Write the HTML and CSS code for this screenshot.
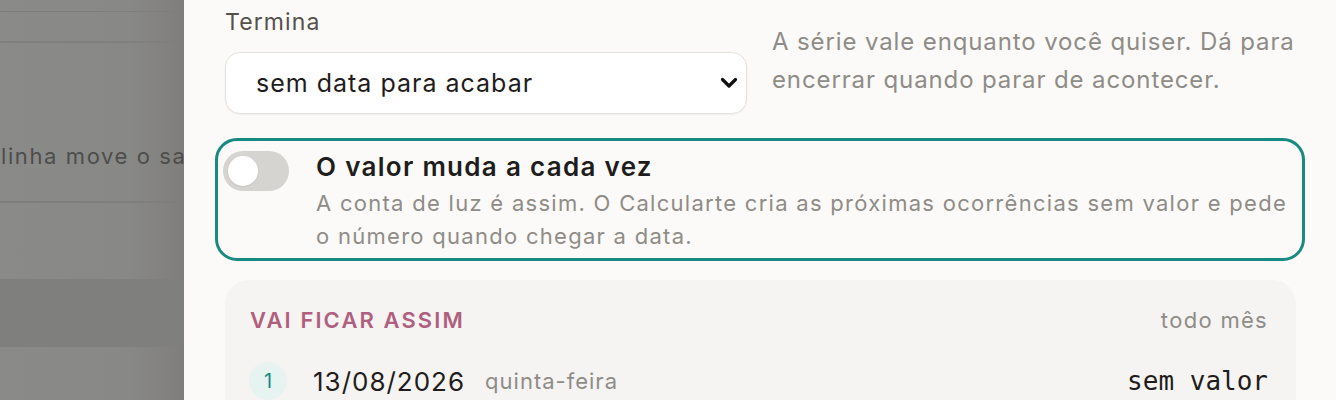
FILE: index.html
```html
<!DOCTYPE html>
<html lang="pt-BR">
<head>
  <meta charset="UTF-8">
  <meta name="viewport" content="width=device-width, initial-scale=1.0">
  <title>Nova série</title>
  <link rel="stylesheet" href="styles.css">
</head>
<body>
  <div class="backdrop">
    <div class="page">
      <div class="page-row thin"></div>
      <div class="page-row">
        <p class="page-text">linha move o saldo do mês</p>
      </div>
      <div class="page-row"></div>
      <div class="page-row shaded"></div>
    </div>
  </div>

  <aside class="drawer">
    <div class="field-row">
      <div class="field">
        <label class="label" for="ends">Termina</label>
        <select class="select" id="ends">
          <option>sem data para acabar</option>
          <option>numa data</option>
          <option>depois de algumas vezes</option>
        </select>
      </div>
      <p class="hint">A série vale enquanto você quiser. Dá para encerrar quando parar de acontecer.</p>
    </div>

    <label class="option">
      <input class="switch-input" type="checkbox">
      <span class="switch"><span class="knob"></span></span>
      <span class="option-text">
        <span class="option-title">O valor muda a cada vez</span>
        <span class="option-desc">A conta de luz é assim. O Calcularte cria as próximas ocorrências sem valor e pede o número quando chegar a data.</span>
      </span>
    </label>

    <section class="preview">
      <header class="preview-head">
        <h3 class="eyebrow">Vai ficar assim</h3>
        <span class="freq">todo mês</span>
      </header>
      <ol class="occurrences">
        <li class="occurrence">
          <span class="num">1</span>
          <span class="date">13/08/2026</span>
          <span class="weekday">quinta-feira</span>
          <span class="amount">sem valor</span>
        </li>
      </ol>
    </section>
  </aside>
</body>
</html>
```

FILE: styles.css
```css
* {
  box-sizing: border-box;
}
body {
  margin: 0;
  height: 400px;
  overflow: hidden;
  display: flex;
  font-family: Inter, "Noto Sans", sans-serif;
  background: #fbfaf8;
}

/* dimmed page behind the drawer */
.backdrop {
  width: 184px;
  flex-shrink: 0;
  overflow: hidden;
  background: linear-gradient(90deg, #8a8a89 0%, #888887 70%, #7f7e7c 100%);
}
.page {
  width: 700px;
}
.page-row.thin {
  height: 32px;
  border-top: 1px solid #7e7e7d;
  border-bottom: 2px solid #7f7f7e;
  margin-top: 11px;
}
.page-row:nth-child(2) {
  height: 160px;
  border-bottom: 2px solid #7e7e7d;
  padding-top: 99px;
}
.page-row:nth-child(3) {
  height: 76px;
}
.page-row.shaded {
  height: 68px;
  background: #7f7f7d;
}
.page-text {
  margin: 0 0 0 1px;
  font-size: 22px;
  line-height: 28px;
  letter-spacing: 1.6px;
  color: #4d4d4c;
  white-space: nowrap;
}

/* drawer */
.drawer {
  flex: 1;
  padding: 8px 40px 0 41px;
  background: #fbfaf8;
}
.field-row {
  display: grid;
  grid-template-columns: 522px 1fr;
  column-gap: 25px;
}
.label {
  display: block;
  font-size: 23px;
  line-height: 28px;
  letter-spacing: 1.1px;
  color: #56504b;
  margin-bottom: 16px;
}
.select {
  width: 100%;
  height: 62px;
  padding: 0 40px 0 30px;
  border: 1px solid #e4e2dc;
  border-radius: 15px;
  background: #fff url("data:image/svg+xml,%3Csvg xmlns='http://www.w3.org/2000/svg' width='18' height='12' viewBox='0 0 18 12'%3E%3Cpath d='M2.5 2.5l6.5 6.5 6.5-6.5' fill='none' stroke='%23111' stroke-width='3.2' stroke-linecap='round' stroke-linejoin='round'/%3E%3C/svg%3E") no-repeat right 8px center;
  appearance: none;
  font-family: inherit;
  font-size: 25px;
  letter-spacing: 1px;
  color: #1f1d1b;
  box-shadow: 0 1px 2px rgba(0, 0, 0, 0.05);
}
.hint {
  margin: 15px 0 0;
  font-size: 24px;
  line-height: 38px;
  letter-spacing: 0.88px;
  color: #8f8c87;
}

/* toggle card */
.option {
  display: flex;
  gap: 27px;
  margin: 24px -9px 0 -10px;
  padding: 10px 6px 5px 5px;
  border: 3px solid #178b81;
  border-radius: 22px;
  cursor: pointer;
}
.switch-input {
  display: none;
}
.switch {
  flex-shrink: 0;
  width: 66px;
  height: 40px;
  border-radius: 20px;
  background: #d6d4d0;
  padding: 5px;
}
.knob {
  display: block;
  width: 30px;
  height: 30px;
  border-radius: 50%;
  background: #fff;
  box-shadow: 0 1px 2px rgba(0, 0, 0, 0.08);
}
.option-text {
  display: flex;
  flex-direction: column;
}
.option-title {
  font-size: 26px;
  line-height: 32px;
  font-weight: 600;
  letter-spacing: 1.3px;
  color: #1f1d1b;
}
.option-desc {
  font-size: 22px;
  line-height: 33px;
  letter-spacing: 1.28px;
  color: #8f8c87;
  margin-top: 4px;
}

/* preview */
.preview {
  margin-top: 19px;
  padding: 26px 28px 0 24px;
  border-radius: 24px;
  background: #f5f4f2;
  height: 200px;
}
.preview-head {
  display: flex;
  justify-content: space-between;
  align-items: center;
}
.eyebrow {
  margin: 0 0 0 1px;
  font-size: 22px;
  line-height: 28px;
  font-weight: 600;
  letter-spacing: 2.1px;
  text-transform: uppercase;
  color: #b0607f;
}
.freq {
  font-size: 22px;
  letter-spacing: 1.3px;
  color: #8f8c87;
}
.occurrences {
  list-style: none;
  margin: 0;
  padding: 0;
}
.occurrence {
  display: flex;
  align-items: center;
  height: 64px;
  margin-top: 15px;
}
.num {
  width: 38px;
  height: 38px;
  border-radius: 50%;
  background: #e6f3f1;
  color: #178b81;
  font-size: 20px;
  display: flex;
  align-items: center;
  justify-content: center;
  margin-right: 26px;
}
.date {
  font-size: 26px;
  color: #1f1d1b;
  letter-spacing: 1px;
  margin-right: 20px;
}
.weekday {
  font-size: 22px;
  color: #8f8c87;
  letter-spacing: 1px;
}
.amount {
  margin-left: auto;
  font-family: "DejaVu Sans Mono", monospace;
  font-size: 26px;
  color: #1f1d1b;
}
```
